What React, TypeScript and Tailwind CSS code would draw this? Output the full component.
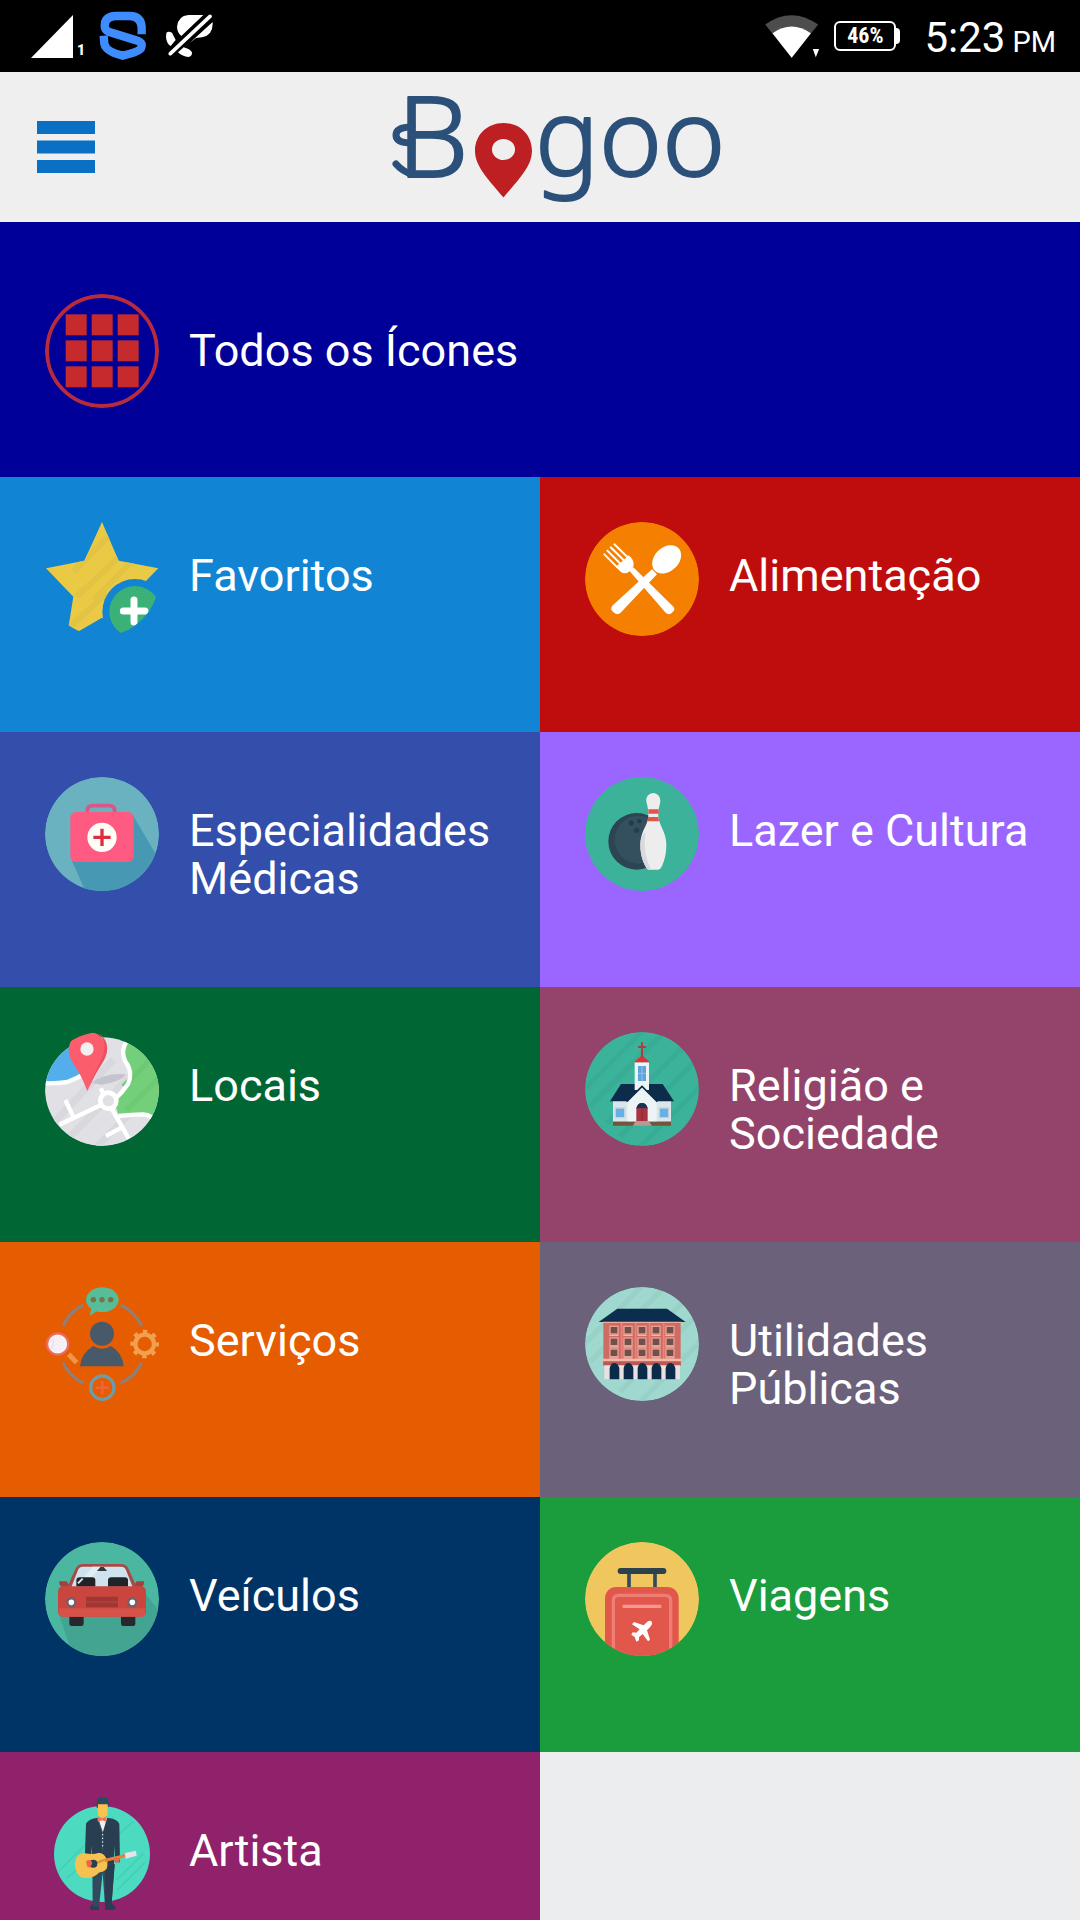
import { useId, type ReactNode } from "react";
import { clsx } from "clsx";

function Badge({ children }: { children: ReactNode }) {
  return (
    <svg viewBox="45 66 342 342" className="size-[114px] shrink-0 rounded-full" aria-hidden="true">
      {children}
    </svg>
  );
}

function Stripes({ opacity = 0.03 }: { opacity?: number }) {
  return (
    <g stroke="#000" strokeOpacity={opacity} strokeWidth="16">
      <path d="M40 240 220 60M60 290 300 50M110 340 380 70M150 380 400 130M200 420 420 200" />
    </g>
  );
}

function AllIcon() {
  return (
    <Badge>
      <circle cx="216" cy="237" r="165" fill="none" stroke="#b82a3c" strokeWidth="12" />
      {[127, 205, 283].map((y) =>
        [107, 185, 263].map((x) => <rect key={`${x}-${y}`} x={x} y={y} width="63" height="63" fill="#c62a2c" />)
      )}
    </Badge>
  );
}

function FavoriteIcon() {
  const clip = useId();
  const star = "M216 66 266 182 385 205 302 290 322 415 216 353 110 415 130 290 48 205 163 182Z";
  return (
    <Badge>
      <clipPath id={clip}>
        <path d={star} />
      </clipPath>
      <path d={star} fill="#eac944" />
      <g clipPath={`url(#${clip})`}>
        <path d="M130 215 260 85M140 290 290 150M190 300 370 120M110 390 230 280" stroke="#e3c343" strokeWidth="18" />
      </g>
      <circle cx="315" cy="335" r="98" fill="#1184d4" />
      <circle cx="315" cy="335" r="77" fill="#3bb077" />
      <path d="M312 300V366M280 333H345" stroke="#fff" strokeWidth="21" strokeLinecap="round" />
    </Badge>
  );
}

function FoodIcon() {
  return (
    <Badge>
      <circle cx="216" cy="237" r="171" fill="#f57f00" />
      <g fill="#fff">
        <ellipse cx="290" cy="178" rx="49" ry="36" transform="rotate(-43 290 178)" />
        <path d="M246 208 261 223 151 339Q143 346 133 339L126 332Q121 325 127 317Z" />
        <path d="M178 212 190 202 311 321Q316 328 309 335L302 341Q294 345 287 338Z" />
        <path d="M152 188 176 166Q192 180 191 194Q190 204 177 215Q165 224 152 215L137 200Z" />
      </g>
      <path
        d="M103 163 142 202M112 152 152 192M122 142 163 182M133 133 176 175"
        stroke="#fff"
        strokeWidth="6"
        strokeLinecap="round"
      />
    </Badge>
  );
}

function MedicalIcon() {
  return (
    <Badge>
      <circle cx="216" cy="237" r="171" fill="#6bb2c0" />
      <path d="M126 318 306 176 420 370 300 440H180Z" fill="#4799b3" />
      <path d="M172 176V168Q172 152 188 152H238Q254 152 254 168V176" fill="none" stroke="#d95688" strokeWidth="11" />
      <rect x="121" y="171" width="190" height="150" rx="17" fill="#ff5a81" />
      <circle cx="216" cy="247" r="44" fill="#fffdf7" />
      <path d="M216 221V273M190 247H242" stroke="#de2d3f" strokeWidth="10" />
    </Badge>
  );
}

function LeisureIcon() {
  return (
    <Badge>
      <circle cx="216" cy="237" r="171" fill="#3cb29b" />
      <circle cx="200" cy="259" r="85" fill="#2c4453" />
      <circle cx="206" cy="254" r="72" fill="#34505f" />
      <g fill="#263c4b">
        <circle cx="184" cy="204" r="8" />
        <circle cx="208" cy="198" r="7" />
        <circle cx="200" cy="226" r="8" />
      </g>
      <path d="M256 170H300V350H256Z" fill="#3cb29b" />
      <path
        d="M250 114C237 114 227 125 229 139C231 152 236 160 235 184C233 213 211 229 211 269C211 307 223 328 230 340Q232 344 237 344H264Q269 344 272 340C279 328 289 305 289 269C289 230 267 213 265 184C264 160 270 151 271 139C272 125 262 114 250 114Z"
        fill="#ededee"
      />
      <path d="M211 269C211 307 223 328 230 340Q232 344 237 344H244Q218 300 226 230Q211 245 211 269Z" fill="#dadadd" />
      <path d="M235 163H266V176H235ZM235 186H265L267 199H232Z" fill="#e0554e" />
    </Badge>
  );
}

function PlacesIcon() {
  const clip = useId();
  return (
    <Badge>
      <clipPath id={clip}>
        <ellipse cx="216" cy="245" rx="171" ry="163" />
      </clipPath>
      <g clipPath={`url(#${clip})`}>
        <rect x="45" y="66" width="342" height="342" fill="#e0e0e5" />
        <path d="M60 350 250 150M110 390 330 170M200 410 330 280" stroke="#d8d8de" strokeWidth="22" />
        <path d="M30 218Q70 222 112 216Q142 205 170 185L150 80H30Z" fill="#54aeeb" />
        <path d="M292 80Q272 118 288 152Q311 184 296 222Q275 253 254 276L266 318Q310 314 345 314Q380 316 400 345V80Z" fill="#74cf7a" />
        <path d="M280 230 400 110M290 300 400 190" stroke="#6dc974" strokeWidth="16" />
        <g fill="none" stroke="#fff" strokeWidth="13">
          <path d="M30 219Q75 222 112 216Q142 205 175 185M292 92Q270 122 286 154Q310 186 294 222Q275 250 254 268M265 318Q305 313 340 313Q367 314 372 336" />
          <path d="M88 344 218 283M106 270 129 318M222 255 212 235M245 296 296 385M228 378 276 352" />
        </g>
      </g>
      <circle cx="235" cy="272" r="24" fill="#e0e0e5" stroke="#fff" strokeWidth="14" />
      <path d="M185 218Q225 188 286 193Q278 214 215 224Z" fill="#c3c4ce" />
      <path d="M172 243Q155 196 128 158C98 110 130 65 172 65C222 65 244 115 220 151Q190 195 172 243Z" fill="#fc5d6c" />
      <path d="M205 70C229 88 228 122 212 151Q189 195 172 243Q194 193 222 151C240 119 232 84 205 70Z" fill="#e9525f" />
      <circle cx="171" cy="117" r="20" fill="#f4eef0" />
    </Badge>
  );
}

function ChurchIcon() {
  return (
    <Badge>
      <circle cx="216" cy="237" r="171" fill="#3bb29a" />
      <Stripes />
      <path d="M129 272H303V334H129Z" fill="#dce6ea" />
      <path d="M153 222H278L312 274H120Z" fill="#0d2b4b" />
      <path d="M194 157H237V240H194Z" fill="#edf4f5" />
      <path d="M192 157 216 136 240 157Z" fill="#e42f3b" />
      <path d="M216 97V142M204 111H228" stroke="#a64340" strokeWidth="6" />
      <path d="M204 168H228V213H204Z" fill="#5ea2de" />
      <path d="M216 168V213M204 190H228" stroke="#8ec3ea" strokeWidth="3" />
      <path d="M172 274 216 230 260 274V334H172Z" fill="#edf4f5" />
      <path d="M170 275 216 229 262 275" fill="none" stroke="#0d2b4b" strokeWidth="5" />
      <path d="M199 334V295Q203 279 216 279Q229 279 233 295V334Z" fill="#a93440" />
      <path d="M199 295Q203 279 216 279Q229 279 233 295Z" fill="#183653" />
      <path d="M216 294V334" stroke="#8c2937" strokeWidth="3" />
      <path d="M136 294H164V323H136ZM268 294H296V323H268Z" fill="#67afe4" stroke="#bed4e0" strokeWidth="4" />
      <path d="M129 336H196V347H129ZM238 336H303V347H238Z" fill="#72553d" />
      <path d="M197 334H236L246 347H188Z" fill="#b99998" />
    </Badge>
  );
}

function PublicIcon() {
  return (
    <Badge>
      <circle cx="216" cy="237" r="171" fill="#9ed8ce" />
      <Stripes />
      <path d="M100 171H332V302H100Z" fill="#ce6c64" />
      <path d="M103 300H330V343H103Z" fill="#eadfe1" />
      <path d="M100 301H332V288H100Z" fill="#bd5751" />
      {[120, 162, 204, 246, 288].map((x) => (
        <g key={x}>
          {[184, 219, 252].map((y) => (
            <g key={y}>
              <rect x={x} y={y} width="24" height="23" fill="#70504b" stroke="#e9a194" strokeWidth="4" />
              <path d={`M${x - 2} ${y + 27}H${x + 26}`} stroke="#f3c7ba" strokeWidth="3" />
            </g>
          ))}
          <path d={`M${x - 1} 343V309Q${x + 3} 294 ${x + 13} 294Q${x + 23} 294 ${x + 28} 309V343Z`} fill="#0b2b4b" />
        </g>
      ))}
      <path d="M155 172V285M197 172V285M239 172V285M281 172V285" stroke="#ee8479" strokeWidth="5" />
      <path d="M95 285H337" stroke="#f2b9aa" strokeWidth="8" />
      <path d="M86 171 142 131H291L347 171Z" fill="#0c2d4e" />
      <path d="M98 172H334" stroke="#f0aea3" strokeWidth="4" />
    </Badge>
  );
}

function ServicesIcon() {
  return (
    <Badge>
      <g fill="none" stroke="#8f7f76" strokeWidth="10">
        <path d="M99 183A130 130 0 0 1 160 120M272 120A130 130 0 0 1 335 183M335 293A130 130 0 0 1 271 355M161 355A130 130 0 0 1 99 293" />
      </g>
      <path d="M184 129 179 153 202 137Z" fill="#57bd98" />
      <ellipse cx="217" cy="104" rx="49" ry="37" fill="#57bd98" />
      <g fill="#7d7045">
        <circle cx="190" cy="104" r="8" />
        <circle cx="216" cy="104" r="8" />
        <circle cx="242" cy="104" r="8" />
      </g>
      <circle cx="216" cy="206" r="36" fill="#48596a" />
      <path d="M150 304Q154 264 190 243Q216 260 242 243Q276 260 281 304Z" fill="#48596a" />
      <path d="M116 268 140 293" stroke="#ed9549" strokeWidth="15" />
      <circle cx="83" cy="237" r="32" fill="#f5f0f4" stroke="#ec6a5e" strokeWidth="7" />
      <path d="M71 223 67 250" stroke="#e6deed" strokeWidth="4" />
      <g fill="none" stroke="#f0a04e">
        <circle cx="344" cy="237" r="28" strokeWidth="13" />
        <circle cx="344" cy="237" r="37" strokeWidth="12" strokeDasharray="13 16" strokeDashoffset="6" />
      </g>
      <circle cx="217" cy="368" r="35" fill="none" stroke="#6b9caa" strokeWidth="10" />
      <path d="M217 348V388M197 368H237" stroke="#f06445" strokeWidth="7" />
    </Badge>
  );
}

function CarIcon() {
  return (
    <Badge>
      <circle cx="216" cy="237" r="171" fill="#4bb7a0" />
      <path d="M87 284 140 440H400V290L342 215 318 290Z" fill="#43a591" />
      <rect x="118" y="282" width="43" height="36" rx="7" fill="#25292d" />
      <rect x="273" y="282" width="43" height="36" rx="7" fill="#25292d" />
      <path d="M88 184H110L120 200H94Q86 194 88 184ZM342 184H320L310 200H336Q344 194 342 184Z" fill="#a83f3c" />
      <path d="M111 204 136 147Q143 132 159 132H273Q289 132 296 147L321 204Z" fill="#a84a46" />
      <path d="M123 204 144 150Q148 140 159 140H273Q284 140 288 150L309 204Z" fill="#cfe3ee" />
      <path d="M136 204 188 140H213L157 204Z" fill="#e2eef5" />
      <path d="M139 200V181Q139 172 149 172H187Q196 172 196 181V200ZM234 200V181Q234 172 244 172H284Q294 172 294 181V200Z" fill="#202428" />
      <path d="M144 190 158 176" stroke="#dce6ea" strokeWidth="6" />
      <path d="M201 153 211 141H221L231 153Z" fill="#343a40" />
      <rect x="84" y="199" width="264" height="91" rx="15" fill="#c9453e" />
      <path d="M86 265H346V278Q346 290 333 290H99Q86 290 86 278Z" fill="#d65249" />
      <path d="M168 230H264V262H168Z" fill="#a13734" />
      <path d="M168 246H264" stroke="#bd443e" strokeWidth="3" />
      <g fill="#fff" stroke="#70606a" strokeWidth="7">
        <circle cx="124" cy="247" r="12" />
        <circle cx="307" cy="247" r="12" />
      </g>
    </Badge>
  );
}

function TravelIcon() {
  return (
    <Badge>
      <circle cx="216" cy="237" r="171" fill="#efc75e" />
      <path d="M177 155V210M255 155V210" stroke="#324a5e" strokeWidth="11" />
      <path d="M152 153H280" stroke="#2b414c" strokeWidth="18" strokeLinecap="round" />
      <rect x="105" y="201" width="221" height="240" rx="34" fill="#e2574c" />
      <path d="M130 410V242Q130 226 146 226H285Q302 226 302 242V410" fill="none" stroke="#ee7d74" strokeWidth="10" />
      <path d="M158 259H274" stroke="#f39a93" strokeWidth="10" />
      <path
        d="M244 304Q250 311 241 320L231 331 240 359 234 364 218 342 207 352 207 361 199 365 194 351 184 344 188 337 199 338 209 328 186 313 192 306 221 316 232 305Q239 300 244 304Z"
        fill="#fff"
      />
    </Badge>
  );
}

function ArtistIcon() {
  return (
    <Badge>
      <circle cx="216" cy="237" r="144" fill="#4cdbc1" />
      <path d="M85 290 250 125M110 310 310 140M262 345 345 262M260 315 340 235" stroke="#44cfb6" strokeWidth="5" />
      <path d="M180 397Q184 387 197 384H207V405H182ZM225 384H241Q252 389 257 397L253 404H225Z" fill="#293e50" />
      <path d="M187 268H254L244 395H225L218 293 207 395H188Z" fill="#334a5e" />
      <path d="M226 268H254L244 395H226Z" fill="#293c50" />
      <path d="M200 129Q174 133 168 146L164 262H182L186 210V270H252V210L256 262H270L268 146Q262 133 236 129Z" fill="#293e50" />
      <path d="M204 129 218 174 231 129Z" fill="#eef1f2" />
      <path d="M202 128 218 174 218 226" fill="none" stroke="#415a6e" strokeWidth="3" />
      <path d="M218 177V220" stroke="#fff" strokeWidth="3" strokeDasharray="4 7" />
      <path d="M203 88H233V119Q218 139 203 119Z" fill="#f8c44d" />
      <path d="M200 98V84L204 70Q218 65 232 70L238 86 234 98V86H204V98Z" fill="#264b5c" />
      <path d="M203 126 216 130 229 126V140L216 136 203 140Z" fill="#f6714e" />
      <path
        d="M175 236Q192 239 204 234Q220 232 228 248Q235 258 232 267Q235 283 218 290Q207 290 199 300Q184 311 162 309Q137 303 135 272Q134 246 151 237Q163 233 175 236Z"
        fill="#f5c252"
      />
      <path d="M222 252 286 237V247L225 261Z" fill="#e97f3c" />
      <path d="M172 275 222 255" stroke="#d7913c" strokeWidth="6" />
      <circle cx="190" cy="266" r="12" fill="#293e50" />
      <path d="M169 258Q182 250 187 264L181 278Q168 276 169 258ZM254 248 270 249 268 262H252Z" fill="#ef6547" />
      <path d="M285 234 318 227 320 242 287 251Z" fill="#e5e3e8" />
    </Badge>
  );
}

const TILES = [
  { href: "#favoritos", label: "Favoritos", icon: FavoriteIcon, color: "bg-[#1184d4]" },
  { href: "#alimentacao", label: "Alimentação", icon: FoodIcon, color: "bg-[#bf0d0d]" },
  { href: "#especialidades", label: "Especialidades Médicas", icon: MedicalIcon, color: "bg-[#334eab]" },
  { href: "#lazer", label: "Lazer e Cultura", icon: LeisureIcon, color: "bg-[#9a66ff]" },
  { href: "#locais", label: "Locais", icon: PlacesIcon, color: "bg-[#006633]" },
  { href: "#religiao", label: "Religião e Sociedade", icon: ChurchIcon, color: "bg-[#94446b]" },
  { href: "#servicos", label: "Serviços", icon: ServicesIcon, color: "bg-[#e65c00]" },
  { href: "#utilidades", label: "Utilidades Públicas", icon: PublicIcon, color: "bg-[#6b617b]" },
  { href: "#veiculos", label: "Veículos", icon: CarIcon, color: "bg-[#003466]" },
  { href: "#viagens", label: "Viagens", icon: TravelIcon, color: "bg-[#1b9c3d]" },
  { href: "#artista", label: "Artista", icon: ArtistIcon, color: "bg-[#90216b]" },
];

function StatusBar() {
  return (
    <div className="flex h-[72px] shrink-0 items-center justify-between bg-black pl-[31px] pr-6 text-white">
      <div className="flex items-center">
        <svg viewBox="0 0 42 43" className="h-[43px] w-[42px]" aria-hidden="true">
          <path d="M42 0V43H0Z" fill="#fff" />
        </svg>
        <span className="ml-1 mt-7 w-2 text-sm leading-4 font-black">1</span>
        <svg viewBox="298 34 144 150" className="ml-[14px] h-[50px] w-12" aria-hidden="true">
          <path
            d="M426 104V82Q424 50 390 49H348Q316 50 315 78Q315 92 329 97L416 124Q430 130 424 146Q418 157 369 168Q318 156 314 132L312 108"
            fill="none"
            stroke="#3f8cff"
            strokeWidth="25"
          />
        </svg>
        <svg viewBox="495 42 144 132" className="ml-[18px] h-11 w-12" aria-hidden="true">
          <g fill="#fff">
            <path d="M610 45H565Q534 48 531 80Q532 99 544 108ZM638 66Q640 105 606 112L588 114 568 130Z" />
            <path d="M499 99Q504 92 516 98L527 120 512 138Q500 132 498 112ZM551 142Q570 147 576 157Q577 169 565 171Q548 170 534 157Z" />
          </g>
          <path d="M511 161 630 49" stroke="#fff" strokeWidth="11" strokeLinecap="round" />
        </svg>
      </div>
      <div className="flex items-center">
        <svg viewBox="75 42 165 130" className="h-[43px] w-[55px]" aria-hidden="true">
          <path d="M75 71Q154 14 235 71L155 171Z" fill="#4d4d4d" />
          <path d="M97 97Q155 57 213 97L155 171Z" fill="#fff" />
          <path d="M219 145H238L228 170Z" fill="#fff" />
        </svg>
        <div className="ml-[14px] flex items-center">
          <span className="flex h-[30px] w-[62px] items-center justify-center rounded-md border-2 border-white font-['Roboto_Condensed','Roboto',sans-serif] text-[22px] leading-6 font-bold">
            46%
          </span>
          <span className="h-4 w-1 rounded-r-sm bg-white" />
        </div>
        <p className="ml-6 flex items-baseline gap-[7px] pt-2 text-[42px] leading-[48px]">
          5:23 <span className="text-[29px]">PM</span>
        </p>
      </div>
    </div>
  );
}

function Logo() {
  return (
    <svg viewBox="390 89 336 116" className="h-[116px] w-[336px] overflow-visible" role="img" aria-label="Bogoo">
      <g
        fill="#2b5079"
        stroke="#2b5079"
        strokeWidth="2"
        strokeLinejoin="round"
        className="font-['Noto_Sans',sans-serif] font-light"
      >
        <text x="397" y="177" fontSize="113">
          B
        </text>
        <text x="535" y="176" fontSize="107">
          goo
        </text>
      </g>
      {/* flourish */}
      <path
        d="M412 127C401 127 396 130 396 135C396 141 403 143 412 143M396 164Q403 172 412 174"
        fill="none"
        stroke="#2b5079"
        strokeWidth="7"
        strokeLinecap="round"
      />
      <path
        fillRule="evenodd"
        fill="#bd1f22"
        d="M503.500 123C487 123 475 135 475 151C475 167 490 181 503.500 197.500C517 181 532 167 532 151C532 135 520 123 503.500 123ZM503.500 139A11.500 10.500 0 1 1 503.500 160A11.500 10.500 0 1 1 503.500 139Z"
      />
    </svg>
  );
}

export default function App() {
  return (
    <div className="flex h-screen w-full flex-col overflow-hidden bg-[#ecedee] font-['Roboto',sans-serif]">
      <StatusBar />
      <header className="flex h-[150px] shrink-0 items-center bg-[#efefef] pl-[37px] pr-[59px]">
        <button aria-label="Menu" className="shrink-0">
          <svg viewBox="0 0 58 52" className="h-[52px] w-[58px]">
            <path d="M0 0H58V13H0ZM0 19.500H58V32.500H0ZM0 39H58V52H0Z" fill="#0a70c3" />
          </svg>
        </button>
        <h1 className="flex flex-1 justify-center">
          <Logo />
        </h1>
      </header>

      <main className="min-h-0 flex-1 overflow-y-auto text-[45px] leading-[48px] text-white [scrollbar-width:none]">
        <nav className="grid grid-cols-2">
          <a href="#todos" className="col-span-2 flex h-[255px] items-center gap-[30px] bg-[#000099] px-[45px] pt-0.5">
            <AllIcon />
            <span>Todos os Ícones</span>
          </a>
          {TILES.map((t) => (
            <a
              key={t.href}
              href={t.href}
              className={clsx("flex h-[255px] items-start gap-[30px] pl-[45px] pr-5 pt-[45px]", t.color)}
            >
              <t.icon />
              <span className="pt-[30px]">{t.label}</span>
            </a>
          ))}
        </nav>
      </main>
    </div>
  );
}
